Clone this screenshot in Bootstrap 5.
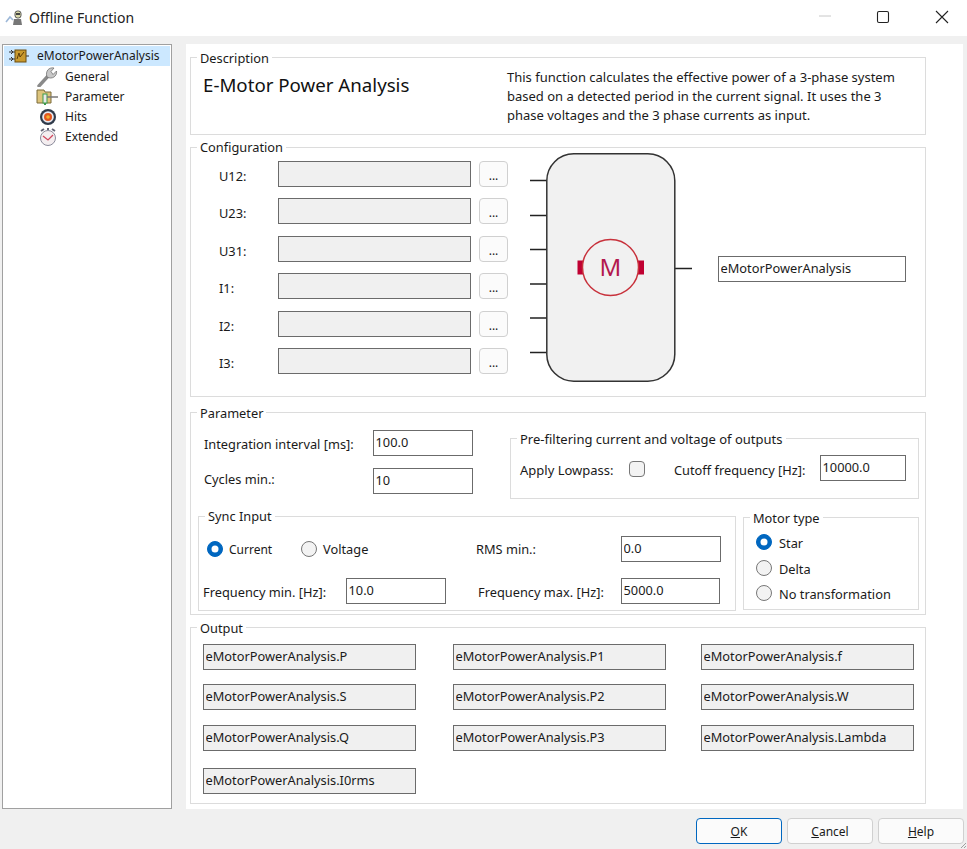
<!DOCTYPE html>
<html lang="en">
<head>
  <meta charset="UTF-8" />
  <meta name="viewport" content="width=device-width, initial-scale=1.0"/>
  <title>Offline Function</title>
  <link href="https://cdn.jsdelivr.net/npm/bootstrap@5.3.3/dist/css/bootstrap.min.css" rel="stylesheet" />
  <style>
    html, body { height: 100%; }
    body { background: #f0f0f0; color: #1a1a1a; font-family: "Noto Sans", "Liberation Sans", sans-serif; font-size: 12.8px; line-height: 16px; overflow: hidden; }
    .dlg { width: 967px; height: 849px; position: relative; }
    .titlebar { height: 36px; background: #fff; padding-left: 5px; }
    .titlebar-text { font-size: 14px; margin-left: 6px; color: #222; }
    .winbtn { position: absolute; top: 10px; }
    .dlg-body { height: 773px; padding-top: 8px; }
    .tree { width: 170px; margin-left: 2px; background: #fff; border: 1px solid #a0a0a0; padding: 1px; font-size: 12px; }
    .tree-row { height: 20px; }
    .tree-row.sel { background: #cce8ff; padding-left: 5px; margin-bottom: 1px; }
    .tree-row.sub { padding-left: 32px; }
    .tree-row.sel svg { margin-right: 8px; }
    .tree-row.sub svg { margin-right: 7px; }
    .main-panel { width: 777px; margin-left: 14px; background: #fff; padding: 13px 0 0 4px; }
    .grp { position: relative; border: 1px solid #dcdcdc; }
    .grp-title { position: absolute; top: -8px; left: 6px; background: #fff; padding: 0 3px; white-space: nowrap; }
    .grp-conf > .grp-title, .grp-sync > .grp-title { top: -9px; }
    .grp-main { width: 736px; }
    .grp-desc { height: 78px; padding: 10px 0 0 12px; margin-bottom: 12px; }
    .desc-head { width: 304px; font-size: 18.7px; line-height: 34px; color: #111; }
    .desc-text { width: 400px; line-height: 19px; font-size: 13px; }
    .grp-conf { height: 250px; padding: 5px 0 0 28px; margin-bottom: 15px; }
    .conf-rows { margin-top: 8px; gap: 11.4px; }
    .conf-label { width: 59px; margin-top: 4px; }
    .fld { display: block; height: 26px; padding: 0 1px 2px 1.5px; line-height: 22px; border: 1.5px solid #6b6b6b; border-radius: 0; font-size: 12.8px; color: #1a1a1a; background: #fff; box-shadow: none; }
    .fld:read-only { background: #fff; }
    .fld.grey, .fld.grey:read-only { background: #f0f0f0; }
    .w-conf { width: 193px; }
    .w-out { width: 188px; margin: 103px 0 0 26px; }
    .w-100px { width: 100px; }
    .w-99px { width: 99px; }
    .w-86px { width: 86px; }
    .w-213px { width: 213px; }
    .dots { width: 29px; height: 26px; margin-left: 8px; padding: 4px 0 0; border: 1px solid #d0d0d0; border-radius: 4px; background: #fbfbfb; font-size: 12px; line-height: 20px; color: #1a1a1a; }
    .diagram { margin-left: 22px; flex: none; }
    .grp-param { height: 203px; padding: 17px 0 0 7px; margin-bottom: 12px; }
    .par-col { padding-left: 6px; gap: 12px; }
    .par-label { width: 169px; }
    .par-label.low { margin-top: 2px; }
    .par-label.high { margin-top: -4px; }
    .grp-pre { width: 409px; height: 61px; margin: 8px 0 0 37px; padding: 16px 0 0 9px; }
    .grp-pre > .grp-title { font-size: 13px; }
    .lbl-apply { width: 109px; margin-top: 4px; font-size: 13px; }
    .lbl-cut { width: 146px; margin: 4px 0 0 29px; }
    .chk.form-check-input { width: 16px; height: 16px; margin: 2px 0 0; border: 1px solid #777; border-radius: 4px; background-color: #f3f3f3; }
    .grp-bottom { margin-top: 17px; }
    .grp-sync { width: 538px; height: 95px; padding: 19px 0 0 4px; }
    .grp-motor { width: 176px; height: 93px; margin: 1px 0 0 7px; padding: 15px 0 0 12px; gap: 7.5px; }
    .rad.form-check-input { width: 16px; height: 16px; margin: 0 6px 0 0; border: 1px solid #777; background-color: #f3f3f3; flex: none; }
    .rad.form-check-input:checked { background-color: #0067c0; border-color: #0067c0; }
    .motor-rad.form-check-input { margin-right: 7px; }
    .txt-low { padding-top: 2px; }
    .txt-low .rad.form-check-input { margin-top: -2px; }
    .sync-row2 { margin-top: 16px; }
    .w-cur { width: 98px; padding-left: 4px; font-size: 12px; }
    .w-vol { width: 175px; }
    .w-rms { width: 145px; }
    .w-fmin { width: 143px; margin-top: 2px; }
    .w-fmax { width: 143px; margin: 2px 0 0 32px; }
    .grp-out { height: 177px; padding: 16px 0 0 12px; }
    .out-grid { display: grid; grid-template-columns: 250px 248px 213px; grid-template-rows: 40px 41px 43px 26px; }
    .dlg-foot { height: 40px; padding: 9px 3px 0 0; gap: 5px; }
    .dlg-btn { width: 86px; height: 26px; padding: 1px 0 0; font-size: 12px; line-height: 24px; color: #1a1a1a; background: #fbfbfb; border: 1px solid #d0d0d0; border-radius: 4px; }
    .dlg-btn.def { border-color: #0067c0; }
    .grip { position: absolute; right: 1px; bottom: 1px; }
  </style>
</head>
<body>
<div class="dlg d-flex flex-column">

  <div class="titlebar d-flex align-items-center">
    <svg width="18" height="18" viewBox="0 0 18 18">
      <path d="M1 13 L5 8 L8 11" fill="none" stroke="#9db8d8" stroke-width="1.6"/>
      <rect x="10" y="2" width="6" height="7" rx="2.5" fill="#d8d8a8" stroke="#555"/>
      <path d="M8 16 L9 10 H16 L17 16 Z" fill="#777"/>
      <rect x="11" y="4" width="4" height="2" fill="#444"/>
    </svg>
    <span class="titlebar-text">Offline Function</span>
    <svg class="winbtn" style="left:819px" width="12" height="12" viewBox="0 0 12 12"><path d="M0 6 H12" stroke="#c8c8c8"/></svg>
    <svg class="winbtn" style="left:876px" width="14" height="14" viewBox="0 0 14 14"><rect x="1.5" y="1.5" width="11" height="11" rx="1.5" fill="none" stroke="#222" stroke-width="1.1"/></svg>
    <svg class="winbtn" style="left:935px" width="14" height="14" viewBox="0 0 14 14"><path d="M1 1 L13 13 M13 1 L1 13" stroke="#222" stroke-width="1.1"/></svg>
  </div>

  <div class="dlg-body d-flex">
    <div class="tree">
      <div class="tree-row sel d-flex align-items-center">
        <svg width="20" height="16" viewBox="0 0 20 16">
          <path d="M0 4 H6 M0 11 H6 M17 8 H20" stroke="#333"/>
          <path d="M2 2 L4 4 L2 6 M2 9 L4 11 L2 13" fill="none" stroke="#333"/>
          <rect x="6" y="2" width="11" height="12" fill="#c99a2e" stroke="#6b4c10"/>
          <path d="M8 11 L10 5 L11 9 L15 4" fill="none" stroke="#5c3d08"/>
        </svg>
        <span>eMotorPowerAnalysis</span>
      </div>
      <div class="tree-row sub d-flex align-items-center">
        <svg width="22" height="20" viewBox="0 0 22 20">
          <path d="M3 19 L13 8" stroke="#8a8a8a" stroke-width="3.4" stroke-linecap="round"/>
          <path d="M11 10 C9 4 13 0 18 1 L15 4.5 L17 7.5 L20.5 4 C21.5 9 16 13 11 10 Z" fill="#c8c8c8" stroke="#666" stroke-width=".7"/>
        </svg>
        <span>General</span>
      </div>
      <div class="tree-row sub d-flex align-items-center">
        <svg width="22" height="18" viewBox="0 0 22 18">
          <path d="M1 2 H8 L9 4 H15 V15 H1 Z" fill="#ddc47c" stroke="#7a6a3a"/>
          <rect x="7" y="6" width="4" height="9" fill="#e8e8e8" stroke="#3d9b4a"/>
          <path d="M8 15 H10 V17 H8 Z" fill="#3d9b4a"/>
          <path d="M11 9 H22" stroke="#777" stroke-width="1.5"/>
        </svg>
        <span>Parameter</span>
      </div>
      <div class="tree-row sub d-flex align-items-center">
        <svg width="22" height="18" viewBox="0 0 22 18">
          <circle cx="12" cy="9" r="8" fill="#2f3a4a"/>
          <circle cx="12" cy="9" r="5.8" fill="#e8e8f0"/>
          <circle cx="12" cy="9" r="4" fill="#e2571e"/>
          <circle cx="12" cy="9" r="1.8" fill="#f4b030"/>
        </svg>
        <span>Hits</span>
      </div>
      <div class="tree-row sub d-flex align-items-center">
        <svg width="22" height="19" viewBox="0 0 22 19">
          <path d="M5 3 L8 1 M19 3 L16 1" stroke="#667" stroke-width="2"/>
          <circle cx="12" cy="10" r="7.5" fill="#f4eef0" stroke="#8a8a9a"/>
          <path d="M7 8 L12 12 L17 7" fill="none" stroke="#d0485e" stroke-width="1.3"/>
          <rect x="11" y="0" width="2" height="2" fill="#667"/>
        </svg>
        <span>Extended</span>
      </div>
    </div>

    <div class="main-panel">
      <div class="grp grp-main grp-desc d-flex">
        <span class="grp-title">Description</span>
        <div class="desc-head">E-Motor Power Analysis</div>
        <div class="desc-text">This function calculates the effective power of a 3-phase system based on a detected period in the current signal. It uses the 3 phase voltages and the 3 phase currents as input.</div>
      </div>

      <div class="grp grp-main grp-conf d-flex align-items-start">
        <span class="grp-title">Configuration</span>
        <div class="conf-rows d-flex flex-column">
          <div class="d-flex align-items-center"><span class="conf-label">U12:</span><input class="form-control fld grey w-conf" readonly /><button class="btn dots">...</button></div>
          <div class="d-flex align-items-center"><span class="conf-label">U23:</span><input class="form-control fld grey w-conf" readonly /><button class="btn dots">...</button></div>
          <div class="d-flex align-items-center"><span class="conf-label">U31:</span><input class="form-control fld grey w-conf" readonly /><button class="btn dots">...</button></div>
          <div class="d-flex align-items-center"><span class="conf-label">I1:</span><input class="form-control fld grey w-conf" readonly /><button class="btn dots">...</button></div>
          <div class="d-flex align-items-center"><span class="conf-label">I2:</span><input class="form-control fld grey w-conf" readonly /><button class="btn dots">...</button></div>
          <div class="d-flex align-items-center"><span class="conf-label">I3:</span><input class="form-control fld grey w-conf" readonly /><button class="btn dots">...</button></div>
        </div>
        <svg class="diagram" width="162" height="229" viewBox="530 153 162 229">
          <path d="M530 180.5 H547 M530 215.5 H547 M530 249.5 H547 M530 284 H547 M530 318 H547 M530 352.5 H547 M675 268.5 H692" stroke="#222" stroke-width="1.5"/>
          <rect x="546.8" y="153.8" width="128" height="227.4" rx="27" fill="#f1f1f1" stroke="#333" stroke-width="1.5"/>
          <rect x="577.5" y="260.5" width="6" height="14" fill="#c00032"/>
          <rect x="638" y="260.5" width="6" height="14" fill="#c00032"/>
          <circle cx="610.5" cy="267.5" r="28" fill="#f1f1f1" stroke="#c8323c" stroke-width="1.5"/>
          <text x="610.5" y="276" text-anchor="middle" font-size="24" fill="#b3184e" font-family="Noto Sans, sans-serif">M</text>
        </svg>
        <input class="form-control fld w-out" value="eMotorPowerAnalysis" />
      </div>

      <div class="grp grp-main grp-param">
        <span class="grp-title">Parameter</span>
        <div class="d-flex align-items-start">
          <div class="par-col d-flex flex-column">
            <div class="d-flex align-items-center"><span class="par-label low">Integration interval [ms]:</span><input class="form-control fld w-100px" value="100.0" /></div>
            <div class="d-flex align-items-center"><span class="par-label high">Cycles min.:</span><input class="form-control fld w-100px" value="10" /></div>
          </div>
          <div class="grp grp-pre align-self-start">
            <span class="grp-title">Pre-filtering current and voltage of outputs</span>
            <div class="d-flex align-items-center">
              <span class="lbl-apply">Apply Lowpass:</span>
              <input type="checkbox" class="form-check-input chk" />
              <span class="lbl-cut">Cutoff frequency [Hz]:</span>
              <input class="form-control fld w-86px" value="10000.0" />
            </div>
          </div>
        </div>
        <div class="grp-bottom d-flex align-items-start">
          <div class="grp grp-sync">
            <span class="grp-title">Sync Input</span>
            <div class="d-flex align-items-center">
              <label class="w-cur txt-low d-flex align-items-center"><input type="radio" name="sync" class="form-check-input rad" checked />Current</label>
              <label class="w-vol d-flex align-items-center"><input type="radio" name="sync" class="form-check-input rad" />Voltage</label>
              <span class="w-rms">RMS min.:</span>
              <input class="form-control fld w-100px" value="0.0" />
            </div>
            <div class="sync-row2 d-flex align-items-center">
              <span class="w-fmin">Frequency min. [Hz]:</span>
              <input class="form-control fld w-100px" value="10.0" />
              <span class="w-fmax">Frequency max. [Hz]:</span>
              <input class="form-control fld w-99px" value="5000.0" />
            </div>
          </div>
          <div class="grp grp-motor d-flex flex-column">
            <span class="grp-title">Motor type</span>
            <label class="txt-low d-flex align-items-center"><input type="radio" name="motor" class="form-check-input rad motor-rad" checked />Star</label>
            <label class="txt-low d-flex align-items-center"><input type="radio" name="motor" class="form-check-input rad motor-rad" />Delta</label>
            <label class="txt-low d-flex align-items-center"><input type="radio" name="motor" class="form-check-input rad motor-rad" />No transformation</label>
          </div>
        </div>
      </div>

      <div class="grp grp-main grp-out">
        <span class="grp-title">Output</span>
        <div class="out-grid">
          <div><input class="form-control fld grey w-213px" readonly value="eMotorPowerAnalysis.P" /></div>
          <div><input class="form-control fld grey w-213px" readonly value="eMotorPowerAnalysis.P1" /></div>
          <div><input class="form-control fld grey w-213px" readonly value="eMotorPowerAnalysis.f" /></div>
          <div><input class="form-control fld grey w-213px" readonly value="eMotorPowerAnalysis.S" /></div>
          <div><input class="form-control fld grey w-213px" readonly value="eMotorPowerAnalysis.P2" /></div>
          <div><input class="form-control fld grey w-213px" readonly value="eMotorPowerAnalysis.W" /></div>
          <div><input class="form-control fld grey w-213px" readonly value="eMotorPowerAnalysis.Q" /></div>
          <div><input class="form-control fld grey w-213px" readonly value="eMotorPowerAnalysis.P3" /></div>
          <div><input class="form-control fld grey w-213px" readonly value="eMotorPowerAnalysis.Lambda" /></div>
          <div><input class="form-control fld grey w-213px" readonly value="eMotorPowerAnalysis.I0rms" /></div>
        </div>
      </div>
    </div>
  </div>

  <div class="dlg-foot d-flex justify-content-end align-items-start">
    <button class="btn dlg-btn def"><u>O</u>K</button>
    <button class="btn dlg-btn"><u>C</u>ancel</button>
    <button class="btn dlg-btn"><u>H</u>elp</button>
  </div>
  <svg class="grip" width="5" height="5" viewBox="0 0 5 5"><path d="M0 5 L5 0 M3 5 L5 3" stroke="#a0a0a0"/></svg>
</div>
<script src="https://cdn.jsdelivr.net/npm/bootstrap@5.3.3/dist/js/bootstrap.bundle.min.js"></script>
</body>
</html>
